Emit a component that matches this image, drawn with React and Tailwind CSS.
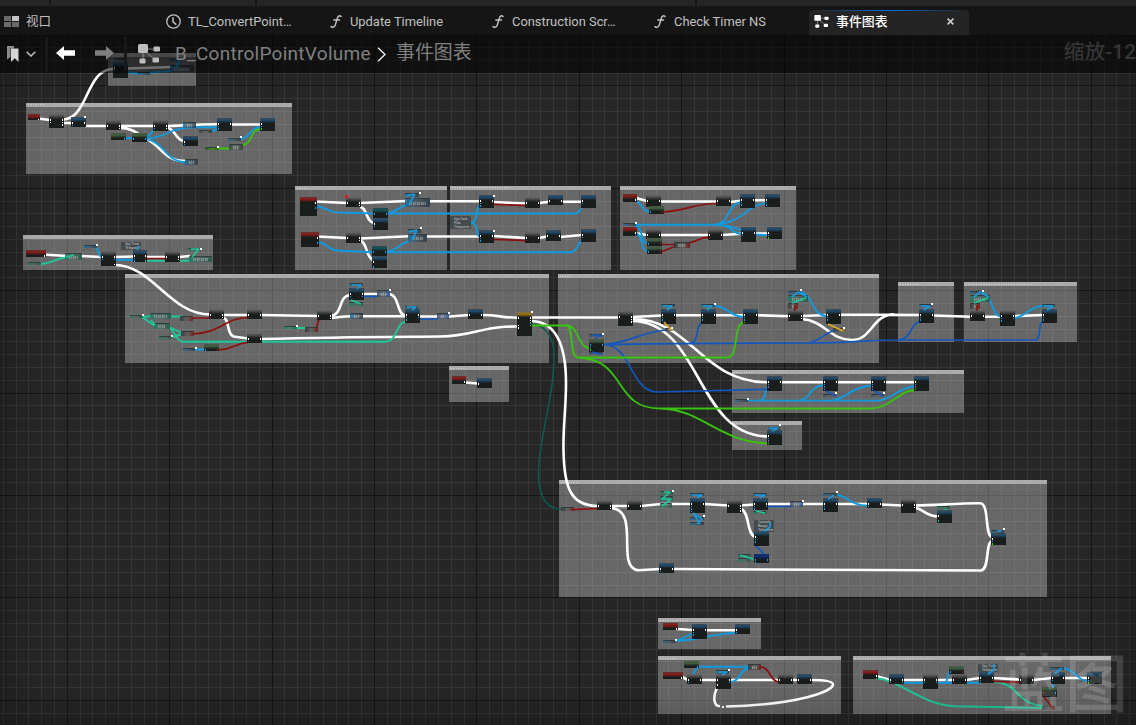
import React from "react";

const ORIGIN_Y = 35;

/* Comment boxes: x1, y1, x2, y2, caption marks width */
const COMMENTS = [
  [108, 53, 196, 86, 0],
  [26, 102.5, 292, 174, 16],
  [23, 235, 213, 270, 0],
  [125, 274, 549, 363, 0],
  [295, 186, 447, 270, 12],
  [449.5, 185.5, 611, 270, 56],
  [620, 186, 796, 270, 8],
  [557.5, 274, 879, 363, 12],
  [898, 282, 954, 342, 20],
  [964, 282, 1077, 342, 66],
  [732, 370, 964, 413, 20],
  [732, 421, 802, 450, 10],
  [449, 366, 509, 402, 16],
  [559, 480, 1047, 597, 20],
  [658, 618, 761, 649, 28],
  [658, 656, 841, 714, 16],
  [853, 656, 1111, 714, 78],
];

/* Nodes: x, y, w, h, kind, left pins, right pins */
const NODES = [
  [113, 62, 15, 16, "b", "wb", "wb"],
  [28, 114, 12, 6, "r", "", "w"],
  [49, 114, 15, 14, "g", "ww", "www"],
  [71, 117, 15, 10, "b", "wb", "w"],
  [106, 120, 15, 10, "g", "w", "ww"],
  [111, 133, 15, 7, "n", "", "b"],
  [132, 133, 15, 9, "n", "b", "b"],
  [153, 120, 15, 11, "g", "wb", "ww"],
  [217, 118, 15, 13, "b", "wbb", "w"],
  [183, 136, 15, 10, "b", "wb", ""],
  [260, 118, 15, 13, "b", "wbe", ""],
  [26, 250, 20, 7, "r", "", "w"],
  [101, 251, 15, 15, "g", "wb", "wb w"],
  [133, 250, 14, 12, "b", "wbb", "wrt"],
  [165, 251, 15, 11, "g", "wr", "ww"],
  [209, 309, 15, 10, "g", "wr", "ww"],
  [247, 309, 15, 10, "g", "wr", "w"],
  [247, 333, 15, 10, "g", "wr", "w"],
  [204, 344, 15, 7, "n", "b", "r"],
  [317, 310, 15, 10, "g", "wr", "ww"],
  [349, 288, 15, 12, "b", "wb", "wb"],
  [405, 309, 15, 14, "b", "wbt", "wb"],
  [468, 309, 15, 10, "b", "w", "w"],
  [517, 312, 15, 24, "y", "w  ww", "wwte"],
  [300, 197, 17, 19, "r", "", "w b"],
  [346, 197, 15, 10, "g", "w", "ww"],
  [373, 208, 15, 10, "t", "b", "b"],
  [373, 218, 15, 12, "b", "wb", ""],
  [301, 232, 18, 15, "r", "", "w b"],
  [346, 232, 15, 11, "g", "w", "ww"],
  [372, 246, 15, 10, "t", "b", "b"],
  [372, 256, 15, 12, "b", "w b", ""],
  [479, 195, 15, 13, "b", "wbb", "wr"],
  [479, 230, 15, 13, "b", "wbb", "wr"],
  [525, 197, 15, 11, "g", "wr", "w"],
  [525, 232, 15, 11, "g", "wr", "w"],
  [548, 195, 15, 10, "b", "w", "w"],
  [546, 230, 15, 11, "b", "w", "w"],
  [581, 195, 15, 13, "b", "wb", ""],
  [581, 229, 15, 13, "b", "wb", ""],
  [623, 194, 14, 8, "r", "", "wb"],
  [646, 195, 15, 12, "g", "wr", "w"],
  [649, 206, 15, 8, "n", "b", "r"],
  [716, 195, 15, 11, "g", "wr", "w"],
  [740, 194, 15, 14, "b", "wbb", "w"],
  [765, 194, 15, 13, "b", "wbb", ""],
  [623, 227, 14, 9, "r", "", "wb"],
  [646, 229, 15, 10, "g", "wr", "w"],
  [647, 238, 15, 8, "n", "b", "r"],
  [647, 246, 15, 8, "n", "b", "r"],
  [708, 229, 15, 11, "g", "wr", "w"],
  [741, 227, 15, 15, "b", "wb", "w"],
  [767, 227, 15, 12, "b", "wbe", ""],
  [618, 311, 15, 15, "g", "w", "www"],
  [661, 309, 15, 15, "b", "wbb", "w"],
  [701, 309, 15, 15, "b", "wbb", "w"],
  [743, 309, 15, 15, "b", "wbbe", "w"],
  [589, 339, 15, 13, "n", "bbe", "b"],
  [788, 310, 15, 11, "g", "wr", "ww"],
  [826, 309, 15, 15, "b", "wbb", "w"],
  [919, 309, 15, 14, "b", "wbb", "w"],
  [970, 310, 15, 11, "g", "wr", "w"],
  [1000, 310, 15, 16, "g", "wbb", "wb"],
  [1042, 309, 15, 14, "b", "wbb", ""],
  [767, 376, 15, 15, "b", "wbp", "w"],
  [823, 376, 15, 15, "b", "wbpb", "w"],
  [871, 376, 15, 15, "b", "wbpb", "w"],
  [914, 376, 15, 15, "b", "wbpe", ""],
  [767, 430, 15, 15, "b", "wbpe", ""],
  [452, 376, 14, 8, "r", "", "w"],
  [477, 378, 15, 10, "b", "w", ""],
  [597, 500, 15, 10, "g", "wr", "ww"],
  [627, 500, 15, 10, "g", "w", "w"],
  [690, 498, 15, 15, "b", "wbbb", "w"],
  [727, 500, 15, 13, "g", "w", "www"],
  [753, 498, 15, 12, "b", "wbb", "wb"],
  [754, 531, 15, 15, "b", "wbb", ""],
  [754, 554, 15, 9, "d", "bt", "b"],
  [659, 563, 15, 10, "b", "wb", "w"],
  [823, 498, 15, 14, "b", "wbb", "w"],
  [867, 498, 15, 10, "b", "wb", "w"],
  [901, 499, 15, 14, "g", "w", "ww"],
  [937, 510, 15, 13, "b", "w t", ""],
  [991, 533, 15, 12, "b", "wbe", ""],
  [663, 623, 15, 7, "r", "", "w"],
  [692, 624, 15, 15, "b", "wbb", "w"],
  [735, 624, 15, 10, "b", "wb", ""],
  [663, 672, 20, 7, "r", "", "w"],
  [684, 661, 15, 7, "n", "", "b"],
  [687, 674, 15, 10, "g", "wb", "w"],
  [716, 674, 15, 15, "g", "w w", "wb"],
  [778, 674, 15, 10, "g", "wr", "w"],
  [797, 674, 15, 10, "b", "w", "w"],
  [863, 670, 15, 9, "r", "", "wt"],
  [889, 674, 15, 10, "b", "wb", "wb"],
  [923, 674, 15, 15, "g", "wb", "wb"],
  [949, 666, 15, 8, "n", "b", "r"],
  [952, 674, 15, 10, "g", "wr", "w"],
  [979, 672, 15, 11, "b", "wbb", "wr"],
  [1019, 674, 15, 10, "g", "wr", "w"],
  [1051, 672, 14, 12, "b", "wb", "w"],
  [1042, 687, 15, 10, "n", "r", "b"],
  [1087, 672, 15, 12, "b", "wbe", ""],
];

/* Compact nodes: x, y, w, h, tint */
const PILLS = [
  [114, 58, 10, 3, "b"], [137, 72, 13, 3, "b"], [170, 65, 24, 7, "b"], [169, 59, 13, 3, "b"],
  [183, 122, 13, 6, "b"], [199, 130, 13, 3, "k"], [228, 138, 13, 3, "b"], [205, 147, 14, 3, "e"],
  [229, 144, 14, 6, "k"], [185, 159, 13, 6, "b"],
  [28, 262, 13, 3, "t"], [65, 253, 17, 7, "t"], [84, 245, 13, 3, "b"], [188, 248, 13, 3, "t"], [189, 256, 23, 6, "t"],
  [130, 315, 13, 3, "t"], [150, 313, 21, 6, "t"], [154, 323, 16, 6, "t"], [180, 316, 13, 5, "r"],
  [181, 331, 13, 5, "r"], [159, 336, 13, 3, "t"], [183, 348, 12, 3, "b"], [284, 326, 13, 3, "t"],
  [305, 327, 13, 5, "r"], [349, 283, 14, 3, "b"], [349, 302, 14, 4, "t"], [377, 290, 13, 7, "d"],
  [350, 313, 13, 6, "b"], [405, 306, 13, 3, "b"], [437, 313, 12, 6, "d"],
  [405, 193, 14, 4, "b"], [405, 198, 25, 9, "b"], [408, 229, 13, 4, "b"], [408, 234, 19, 8, "b"],
  [623, 223, 13, 3, "b"], [674, 242, 16, 6, "r"],
  [661, 304, 14, 3, "b"], [701, 304, 14, 3, "b"], [589, 334, 14, 3, "d"], [589, 352, 14, 3, "d"],
  [665, 328, 8, 3, "y"], [788, 291, 13, 3, "b"], [788, 295, 20, 7, "t"], [788, 303, 10, 6, "r"],
  [833, 328, 11, 4, "y"], [919, 304, 13, 3, "b"], [970, 291, 13, 3, "b"], [970, 295, 20, 7, "t"],
  [970, 303, 10, 6, "r"], [1042, 304, 13, 3, "b"], [735, 399, 13, 3, "b"], [823, 394, 13, 3, "d"],
  [871, 394, 13, 3, "d"], [768, 427, 12, 3, "b"],
  [561, 507, 13, 4, "r"], [660, 491, 13, 4, "t"], [660, 496, 13, 5, "t"], [660, 503, 12, 5, "t"],
  [690, 493, 14, 3, "b"], [690, 517, 14, 3, "b"], [690, 522, 14, 3, "b"], [753, 493, 14, 3, "b"],
  [753, 511, 14, 3, "t"], [790, 501, 13, 6, "d"], [738, 554, 13, 3, "t"], [738, 558, 13, 4, "t"],
  [823, 493, 14, 3, "b"], [937, 506, 13, 3, "t"], [991, 530, 13, 3, "b"],
  [663, 640, 13, 3, "b"], [716, 670, 13, 4, "b"], [748, 664, 13, 6, "r"],
  [1050, 667, 14, 3, "b"], [1042, 706, 13, 4, "r"],
];

/* Bubble labels: x, y, w, h, lines */
const LABELS = [
  [121, 242, 20, 8, ["Spy Time", "Teleporter"]],
  [450, 216, 21, 13, ["Spy Task", "Plus", "Teleporter"]],
  [754, 520, 20, 12, ["Console", "Range", "Teleporter"]],
  [978, 664, 20, 8, ["Spy Time", "Teleporter"]],
];

/* Selection corner marks above nodes */
const MARKS = [
  [84, 116], [96, 244], [200, 248], [142, 314], [171, 335], [217, 146], [240, 136], [419, 192], [420, 227], [493, 195], [493, 230],
  [635, 222], [531, 311], [602, 333], [714, 303], [800, 289], [931, 303], [982, 290], [389, 289], [448, 312],
  [747, 398], [835, 392], [883, 392], [779, 424], [672, 490], [703, 515], [802, 500], [836, 491], [1003, 528], [675, 639], [728, 669],
  [296, 325], [195, 347], [722, 706], [671, 327], [843, 327],
];

const WIRES = {
  teal2: {
    c: "#0c5a50", w: 1.6,
    d: ["M532 324C548 326 554 340 554 355C554 400 538 440 538.5 475C539 500 548 509 562 509.5"],
  },
  white: {
    c: "#ffffff", w: 2.6,
    d: [
      "M38 118.5L50 120", "M63 119.5C88 119.5 86 69 113 69", "M63 123H72", "M85 126H107", "M120 126H154",
      "M167 126C180 126 190 124.3 218 124.3", "M231 124.5H261", "M120 128C133 128 138 134 147 139C165 150 165 161 186 161",
      "M167 128C175 128 176 141 184 141", "M127 68.5L172 67",
      "M43 254.5L67 256", "M81 256L102 257", "M115 257L134 256.5", "M146 257H166", "M179 257L190 256",
      "M115 265C152 265 170 314.5 210 314.5",
      "M223 315H248", "M261 315L318 316", "M223 318C230 318 226 336 235 336.8L248 338.5",
      "M261 339C340 337 380 337 440 336.5C475 336 480 326 518 326.5",
      "M331 315.5C343 315 338 296 350 295", "M363 294H389C400 295 396 315 406 315.5", "M331 318C340 317 345 316.3 355 316.3H406",
      "M419 316.5H450L469 315", "M482 315C500 315 500 317.6 518 317.8",
      "M315 201.5L347 203", "M360 203L407 201", "M430 201.3H480", "M493 202L526 203.5", "M539 203L549 201.7", "M562 201.7H582",
      "M317 236.5L347 238", "M360 238.5L409 236.3", "M426 236.5H480", "M493 236L526 238", "M539 238L547 236.5", "M560 237L582 235",
      "M360 207C367 207 366 222 374 223", "M360 241C367 241 366 258 373 260",
      "M636 198L647 201", "M660 201.5H717", "M730 202L741 200.7", "M754 200.3H766",
      "M635 233L647 235", "M660 235H709", "M722 235L742 233.7", "M755 233.5H768",
      "M531 317.5H619", "M632 317L662 315.5", "M675 315.2H702", "M715 315.2H744", "M757 315.2L789 316.2", "M802 316L827 315",
      "M840 314.7H890L920 315", "M933 315.5L971 316.7",
      "M802 319C825 321 830 340 852 340C872 340 872 314.5 894 314.5",
      "M632 319C692 319 700 382.3 769 382.3", "M632 321C702 322 695 436.5 769 436.5",
      "M532 321C552 322 566 338 566 383C566 410 563 425 563.5 450C564 490 572 506 598 506",
      "M984 316.7H1001", "M1014 316.2L1043 315",
      "M781 382.3H824", "M837 382.3H872", "M885 382.3H915", "M465 382.5L478 383.5",
      "M611 506H628", "M641 506L661 504H691", "M704 504L728 505.5", "M741 505.5L754 504.5", "M767 504H824", "M837 504H868",
      "M881 504.5L902 505.5", "M915 505.5C935 505.5 960 503 980 503.3C990 504 984 534 992 537.5",
      "M611 508C641 510 615 567 638 570.3L660 569", "M673 569L981 570.5C990 569 985 543 992 541",
      "M741 509C750 512 746 533 755 537", "M915 508C922 508 926 516.5 938 516.5",
      "M677 629L693 630", "M706 630.3H736",
      "M682 677L688 680", "M701 680H717", "M730 680H779", "M792 680H798",
      "M811 680C828 680 833 682 833 684.5C833 691 800 704.5 726 706.5", "M717 688C713 696 713 706 720 706.3",
      "M876 676L890 680", "M903 680H924", "M937 680H953", "M966 680L980 678", "M993 678L1020 679.5", "M1033 680L1052 678", "M1064 678H1088",
    ],
  },
  blue: {
    c: "#0f9be0", w: 1.9,
    d: [
      "M125 138H133", "M146 138.5C168 138 166 127.5 196 127.3H218", "M146 138L154 130", "M146 139C165 142 165 162 186 162",
      "M212 131L218 129.5", "M241 139C250 138 250 127 261 127", "M127 72L138 73.5L172 71L179 61",
      "M94 246C99 248 98 257 103 258", "M84 246H95", "M115 259.7H134", "M136 252L139 246", "M195 349.5H205",
      "M316 206C325 207 328 212 338 212.5L374 213.5H575C580 213.5 579 209 583 207", "M387 213.5C398 212 399 206 408 204.5",
      "M318 242C327 243 328 250 338 250.5L373 252.2H571C577 252 577 244 583 239", "M386 252.2C397 250 400 244 409 241",
      "M471 222.5C480 222 474 206 481 204", "M471 222.5C480 223 474 237 481 237",
      "M634 200C643 202 640 211 650 212", "M635 224.7H715C730 224 727 203 742 202", "M715 224.7C745 222 745 205 767 203",
      "M715 224.7C735 225 730 234 742 234", "M715 224.7C740 225 745 236 768 235",
      "M634 225C645 228 639 243 648 243", "M634 232C645 235 639 251 648 251",
      "M714 305.5C727 306 730 317 744 317", "M980 293C994 293 990 316 1002 317", "M800 292C814 294 810 315 827 316",
      "M1014 318C1027 317 1027 307 1043 306H1053",
      "M748 400.6H878", "M760 400.6C768 399 763 388 769 386", "M797 401C812 400 808 386 824 385.3",
      "M829 401C848 399 850 387 872 385.5", "M876 401C892 400 897 388 915 386",
      "M837 495C848 496 850 505.5 868 505.7", "M676 641L693 633.5", "M676 641C700 640 715 633 736 633",
      "M697 666.7H750", "M698 667C694 670 694 674 692 676", "M730 682C741 682 739 669 749 668.5",
      "M903 682.7H980", "M946 682C949 678 947 672 951 670", "M1063 668C1075 669 1077 681 1088 681",
    ],
  },
  navy: {
    c: "#1257bd", w: 1.7,
    d: [
      "M363 296.3H378", "M419 319H438", "M767 506.5H792", "M756 546L766 556",
      "M604 344.7C640 343.5 700 343.2 810 343C850 342.5 870 340 900 340H1036C1042 338 1037 324 1043 321",
      "M604 344.5C630 343 640 332 667 330", "M690 343.3C700 342 695 325 702 322.5", "M604 344.5C632 345 630 392 658 392L768 389.3",
      "M807 343C820 342 825 332 836 330", "M898 340C913 339 909 324 920 321",
    ],
  },
  green: {
    c: "#38c40c", w: 1.8,
    d: [
      "M206 148.5H232", "M241 145C254 145 248 130 261 129",
      "M532 325.5H567C579 326 577 347 590 348.5", "M567 325.5C574 327 569 355 577 357.5H727C740 357 732 324 744 322.5",
      "M577 357.5C628 359 612 408.5 660 408.5H872C890 408 900 390 915 390", "M660 408.5C702 409 720 443 769 443.3",
    ],
  },
  teal: {
    c: "#1fc79a", w: 1.9,
    d: [
      "M40 264C52 264 55 258 66 257.5", "M146 260.7H190", "M142 316.5H152", "M171 316.5H182",
      "M142 317L155 326", "M169 327L182 333", "M173 337L182 334", "M169 327C173 329 177 341.7 182 341.7H385C398 341.7 396 322 406 321.5",
      "M285 328H307", "M944 507L948 512", "M876 678C902 681 920 704 955 706.3L1043 708", "M992 682C1020 682 1015 704 1043 706",
    ],
  },
  red: {
    c: "#8c0f0f", w: 1.7,
    d: [
      "M146 258.5H167", "M192 318H210", "M193 334C220 333 225 318 248 317.5", "M218 350C235 349 235 343 248 342.3", "M316 329L319 319",
      "M493 204.3L527 205.7", "M493 239.3L527 240.7", "M663 212C685 211 695 203.5 717 203.5", "M661 244.5H675", "M661 252L676 246", "M689 243C700 240 700 237.3 709 237.3",
      "M572 509.7L599 508.5", "M761 667C770 667 770 682 779 682", "M961 673V676", "M993 681.3L1020 682.3",
    ],
  },
};

/* Short links between stacked nodes, drawn above the compact nodes */
const LINKS = {
  blue: {
    c: "#1a9ade", w: 1.7,
    d: [
      "M415 194L409 204", "M406 196L414 194", "M417 230L412 240", "M409 232L417 230", "M137 250L139 246", "M176 68L180 60",
      "M663 306H672L667 310", "M703 306H712L707 310", "M921 306H930L924 310", "M1044 306H1053L1047 310",
      "M792 297L798 292L807 297", "M974 297L980 292L989 297",
      "M693 513L702 519L697 524", "M694 514L700 524", "M692 495H702L697 498", "M755 495H765L760 498", "M828 499L834 495",
      "M352 285H361L357 289", "M407 307H416L412 310", "M718 672H727L722 675", "M1055 673L1062 668", "M1053 684V688",
      "M770 522V527L764 531", "M994 664V670L988 674", "M997 531H1002", "M769 428H778L772 431",
    ],
  },
  navy: {
    c: "#1257bd", w: 1.6,
    d: ["M826 391L834 395", "M874 391L882 395", "M592 335H600L595 339", "M592 352L600 354"],
  },
  teal: {
    c: "#1fc79a", w: 1.6,
    d: [
      "M191 249H199L192 257", "M351 300L361 304", "M756 511L765 513", "M664 492H670L662 499H671L662 506", "M155 325L151 320",
      "M792 303L806 298", "M974 303L988 298", "M66 257L74 255", "M740 555L753 559",
    ],
  },
  red: { c: "#8c0f0f", w: 1.6, d: ["M795 305V311", "M977 305V311", "M1044 697L1052 707"] },
  gold: { c: "#e0a91f", w: 1.8, d: ["M664 322L671 330", "M828 324L842 330.5"] },
};

const HEADS = {
  b: "bg-linear-to-b from-[#3c4b56] via-[#1f4866] to-[#192022]",
  g: "bg-linear-to-b from-[#6a6a6a] via-[#474747] to-[#1d1f1e]",
  r: "bg-linear-to-b from-[#653030] via-[#861818] to-[#231a19]",
  n: "bg-linear-to-b from-[#4a5849] via-[#3d5a3e] to-[#1b201c]",
  t: "bg-linear-to-b from-[#2a4c50] via-[#0e4f53] to-[#18201f]",
  y: "bg-linear-to-b from-[#84703a] via-[#94700a] to-[#28231a]",
  d: "bg-linear-to-b from-[#1a3364] via-[#0c2c70] to-[#141c2c]",
};

const PIN = {
  w: "bg-white", b: "bg-[#1aa0ea]", r: "bg-[#a31515]", t: "bg-[#20c998]",
  e: "bg-[#3bd010]", p: "bg-[#7b62c9]", " ": "bg-transparent",
};

const PILL = {
  b: "from-[#1b6b97]/90 via-[#3f5260]/70 to-[#2b3c48]/90",
  t: "from-[#1d7a64]/90 via-[#4b6960]/70 to-[#1f5c4c]/90",
  r: "from-[#333a38]/90 via-[#5c5c5c]/70 to-[#6b1414]/90",
  k: "from-[#3a4440]/90 via-[#63706a]/70 to-[#333835]/90",
  e: "from-[#3b4a3a]/90 via-[#3a7a24]/70 to-[#2e6a18]/90",
  d: "from-[#3a4d66]/90 via-[#5c6670]/70 to-[#1d4a90]/90",
  y: "from-[#3a4658]/90 via-[#4b5058]/80 to-[#c09020]/90",
};

const range = (n) => Array.from({ length: n }, (_, i) => i);

function Grid() {
  const vs = range(90).map((i) => ({ p: Math.floor(67.2 + 12.8 * (i - 5) + 0.01), major: (i - 5) % 8 === 0 }));
  const hs = range(60).map((i) => ({ p: Math.floor(85.8 + 12.8 * (i - 4) + 0.01), major: (i - 4) % 8 === 0 }));
  const minor = vs.filter((l) => !l.major).map((l) => `M${l.p + 0.5} 0V725`).join("") +
    hs.filter((l) => !l.major).map((l) => `M0 ${l.p + 0.5}H1136`).join("");
  const major = vs.filter((l) => l.major).map((l) => `M${l.p + 0.5} 0V725`).join("") +
    hs.filter((l) => l.major).map((l) => `M0 ${l.p + 0.5}H1136`).join("");
  return (
    <svg className="absolute inset-0" width="1136" height="690" viewBox="0 35 1136 690">
      <path d={minor} stroke="#353535" strokeWidth="1" />
      <path d={major} stroke="#151515" strokeWidth="1" />
    </svg>
  );
}

function Comment({ box: [x1, y1, x2, y2, t] }) {
  return (
    <div
      className="absolute flex flex-col bg-white/30"
      style={{ left: x1, top: y1 - ORIGIN_Y, width: x2 - x1, height: y2 - y1 }}
    >
      <div className="flex h-1 items-center bg-[#ababab] pl-0.5">
        {t > 0 && (
          <div
            className="h-px bg-[repeating-linear-gradient(90deg,#d4d4d4_0_1px,#9c9c9c_1px_2px,#c4c4c4_2px_4px,#9d9d9d_4px_5px)]"
            style={{ width: t }}
          />
        )}
      </div>
    </div>
  );
}

function Pins({ pins }) {
  return (
    <div className="flex flex-col gap-px">
      {pins.split("").map((p, i) => (
        <i key={i} className={`block h-[1.6px] w-[1.4px] ${PIN[p]}`} />
      ))}
    </div>
  );
}

function Node({ node: [x, y, w, h, kind, l, r] }) {
  return (
    <div
      className="absolute flex flex-col overflow-hidden bg-[#191e1d]"
      style={{ left: x, top: y - ORIGIN_Y, width: w, height: h }}
    >
      <div className={`h-[5px] shrink-0 ${HEADS[kind]}`} />
      <div className="flex justify-between px-px">
        <Pins pins={l} />
        <Pins pins={r} />
      </div>
    </div>
  );
}

function Pill({ pill: [x, y, w, h, tint] }) {
  return (
    <div
      className={`absolute flex items-center justify-center rounded-[1px] border-t border-[#2c3436]/80 bg-linear-to-r ${PILL[tint]}`}
      style={{ left: x, top: y - ORIGIN_Y, width: w, height: h }}
    >
      {h > 5 && (
        <i
          className="block h-[3px] bg-[repeating-linear-gradient(90deg,#a9b4b4_0_1px,#7a8686_1px_2px,#96a2a2_2px_3px,#5c6767_3px_4px)] opacity-60"
          style={{ width: w - 8 }}
        />
      )}
    </div>
  );
}

function Wires({ groups }) {
  return (
    <svg className="absolute inset-0" width="1136" height="690" viewBox="0 35 1136 690" fill="none">
      {Object.entries(groups).map(([k, s]) => (
        <path key={k} d={s.d.join("")} stroke={s.c} strokeWidth={s.w} strokeLinejoin="round" />
      ))}
    </svg>
  );
}

function GraphIcon({ className }) {
  return (
    <svg className={className} viewBox="0 0 22 20" fill="currentColor">
      <path d="M5 5L18 5M5 5V17M6 6L17 16" stroke="currentColor" strokeWidth="1" opacity=".6" />
      <rect x="0" y="0" width="10" height="9" rx="1.5" />
      <rect x="15.5" y="2.5" width="6.5" height="5" rx="1.2" />
      <rect x="1.5" y="14.5" width="6" height="5" rx="1.2" />
      <rect x="14.5" y="13.5" width="6.5" height="5" rx="1.2" />
    </svg>
  );
}

function FnIcon() {
  return (
    <svg className="h-[13px] w-3 shrink-0" viewBox="0 0 12 13" fill="none" stroke="#c0c0c0" strokeLinecap="round">
      <path d="M11 1.4C9.8 .4 8.1 .7 7.5 2.8L5.3 9.9C4.6 12.3 2.6 12.9 1 11.7" strokeWidth="1.5" />
      <path d="M3.8 5H9.6" strokeWidth="1.3" />
    </svg>
  );
}

function Tab({ icon, children, className }) {
  return (
    <div className={`flex shrink-0 items-center whitespace-nowrap ${className}`}>
      {icon}
      <span>{children}</span>
    </div>
  );
}

export default function App() {
  return (
    <div className="flex h-[725px] w-[1136px] flex-col overflow-hidden bg-[#151515] font-['Roboto','Noto_Sans_CJK_SC',sans-serif] text-[#c0c0c0]">
      <div className="flex h-1.5 shrink-0 bg-[#262626]">
        <div className="h-[5px] w-[51px] border-r-2 border-[#151515]" />
        <div className="h-[5px] w-[206px] border-r-2 border-[#151515]" />
        <div className="h-[5px] w-[440px] border-r-2 border-[#151515]" />
      </div>

      <div className="flex h-[29px] shrink-0 items-stretch pt-[2px] text-[12.9px]">
        <Tab
          className="w-[166px] gap-[7px] pl-1"
          icon={
            <svg className="h-[11px] w-[15px]" viewBox="0 0 15 11">
              <path fill="#6a6a6a" d="M0 0h7v5H0zM0 6h7v5H0zM8 6h7v5H8z" />
              <path fill="#c4c4c4" d="M8 0h7v5H8z" />
            </svg>
          }
        >
          <span className="text-[12.5px]">视口</span>
        </Tab>
        <Tab
          className="w-[164px] gap-[7px]"
          icon={
            <svg className="size-[15px]" viewBox="0 0 15 15" fill="none" stroke="#c0c0c0">
              <circle cx="7.5" cy="7.5" r="6.7" strokeWidth="1.3" />
              <path d="M7 3.2V7.8L10.3 10.6" strokeWidth="1.5" />
            </svg>
          }
        >
          TL_ConvertPoint…
        </Tab>
        <Tab className="w-[162px] gap-2" icon={<FnIcon />}>Update Timeline</Tab>
        <Tab className="w-[162px] gap-2" icon={<FnIcon />}>Construction Scr…</Tab>
        <Tab className="w-[155px] gap-2" icon={<FnIcon />}>Check Timer NS</Tab>
        <div className="mt-0.5 flex w-40 flex-col rounded-t bg-[#242424] text-white">
          <div className="mx-1 h-px bg-linear-to-r from-transparent via-[#0070e0] to-transparent" />
          <div className="flex flex-1 items-center pb-[3px] pl-[5px] pr-[15px]">
            <GraphIcon className="h-[13px] w-[15px]" />
            <span className="ml-[7px] text-[12.9px] font-medium">事件图表</span>
            <svg className="ml-auto size-[7px]" viewBox="0 0 7 7" stroke="#c8c8c8" strokeWidth="1.7">
              <path d="M.6 .6L6.4 6.4M6.4 .6L.6 6.4" />
            </svg>
          </div>
        </div>
      </div>

      <div className="relative min-h-0 flex-1 overflow-hidden bg-[#262626]">
        <Grid />
        {COMMENTS.map((c, i) => <Comment key={i} box={c} />)}
        <Wires groups={WIRES} />
        {LABELS.map(([x, y, w, h, lines], i) => (
          <div
            key={i}
            className="absolute flex flex-col justify-center rounded-[1px] bg-[#454b4d] pl-1 text-[3.4px] leading-[4px] text-[#c4c8c8]"
            style={{ left: x, top: y - ORIGIN_Y, width: w, height: h }}
          >
            {lines.map((s) => <span key={s}>{s}</span>)}
          </div>
        ))}
        {PILLS.map((p, i) => <Pill key={i} pill={p} />)}
        {NODES.map((n, i) => <Node key={i} node={n} />)}
        <Wires groups={LINKS} />
        {MARKS.map(([x, y], i) => (
          <i key={i} className="absolute block h-[1.5px] w-[1.5px] bg-white" style={{ left: x, top: y - ORIGIN_Y }} />
        ))}
        <i className="absolute left-[345px] top-[160px] block size-[3px] bg-[#d42020]" />

        <div className="absolute inset-0 shadow-[inset_0_0_44px_rgba(0,0,0,0.38)]" />

        <div className="absolute bottom-[9px] right-[8px] text-[63px] font-medium leading-none text-white/15">蓝图</div>

        <div className="absolute inset-x-0 top-0 flex h-[38px] items-center bg-black/55">
          <svg className="ml-[7px] h-4 w-3 shrink-0" viewBox="0 0 12 16">
            <path d="M0 0H7V2.5H3.5V11L0 13.5Z" fill="#8a8a8a" />
            <path d="M4 2.5H11.5V16L7.8 12.3L4 16Z" fill="#d4d4d4" />
          </svg>
          <svg className="ml-[7px] h-1.5 w-[10px] shrink-0" viewBox="0 0 10 6" fill="none" stroke="#c0c0c0" strokeWidth="1.5">
            <path d="M.7 .7L5 5L9.3 .7" />
          </svg>
          <div className="ml-[9px] h-[34px] w-[3px] shrink-0 bg-[#191919]" />
          <svg className="-mt-0.5 ml-2 h-[14px] w-[19px] shrink-0" viewBox="0 0 19 14" fill="#ffffff">
            <path d="M0 7L8 0V4.2H19V9.8H8V14Z" />
          </svg>
          <svg className="-mt-0.5 ml-5 h-[14px] w-[19px] shrink-0" viewBox="0 0 19 14" fill="#7e7e7e">
            <path d="M19 7L11 0V4.2H0V9.8H11V14Z" />
          </svg>
          <div className="ml-[10px] h-[34px] w-[3px] shrink-0 bg-[#191919]" />
          <GraphIcon className="ml-[11px] h-5 w-[22px] shrink-0 text-[#bdbdbd]" />
          <span className="ml-[15px] w-[195px] whitespace-nowrap text-[19px] tracking-[0.27px] text-[#808080]">B_ControlPointVolume</span>
          <svg className="ml-[7px] h-[15px] w-[9px] shrink-0" viewBox="0 0 9 15" fill="none" stroke="#e8e8e8" strokeWidth="1.5">
            <path d="M1 .7L8 7.5L1 14.3" />
          </svg>
          <span className="-mt-0.5 ml-2.5 text-[18.9px] text-[#808080]">事件图表</span>
          <span className="-mt-0.5 ml-auto whitespace-nowrap text-[20.8px] font-medium text-[#353535]">缩放-12</span>
        </div>
      </div>
    </div>
  );
}
